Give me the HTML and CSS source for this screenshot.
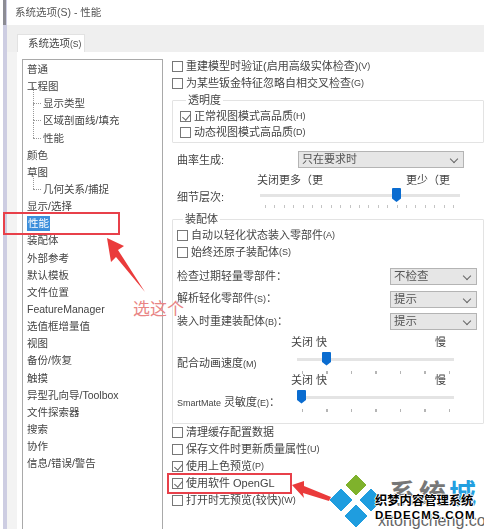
FILE: index.html
```html
<!DOCTYPE html>
<html lang="zh">
<head>
  <meta charset="UTF-8">
  <title>系统选项(S) - 性能</title>
  <link rel="stylesheet" href="styles.css">
</head>
<body>
  <div class="window">
    <div class="titlebar">系统选项(S) - 性能</div>
    <div class="tabband"><div class="tab">系统选项<small>(S)</small></div></div>

    <div class="content">
      <ul class="tree">
        <li>普通</li>
        <li>工程图</li>
        <li class="sub">显示类型</li>
        <li class="sub">区域剖面线/填充</li>
        <li class="sub">性能</li>
        <li>颜色</li>
        <li>草图</li>
        <li class="sub">几何关系/捕捉</li>
        <li>显示/选择</li>
        <li><span class="selected">性能</span></li>
        <li>装配体</li>
        <li>外部参考</li>
        <li>默认模板</li>
        <li>文件位置</li>
        <li>FeatureManager</li>
        <li>选值框增量值</li>
        <li>视图</li>
        <li>备份/恢复</li>
        <li>触摸</li>
        <li>异型孔向导/Toolbox</li>
        <li>文件探索器</li>
        <li>搜索</li>
        <li>协作</li>
        <li>信息/错误/警告</li>
      </ul>

      <div class="options">
        <div class="check"><i class="box"></i>重建模型时验证(启用高级实体检查)<small>(V)</small></div>
        <div class="check"><i class="box"></i>为某些钣金特征忽略自相交叉检查<small>(G)</small></div>

        <fieldset class="group transparency">
          <legend>透明度</legend>
          <div class="check"><i class="box on"></i>正常视图模式高品质<small>(H)</small></div>
          <div class="check"><i class="box"></i>动态视图模式高品质<small>(D)</small></div>
        </fieldset>

        <div class="curve">
          <span class="label">曲率生成:</span>
          <div class="select wide">只在要求时</div>
        </div>
        <div class="detail">
          <span class="label">细节层次:</span>
          <div class="slider-wrap">
            <div class="ends"><span>关闭更多（更</span><span>更少（更</span></div>
            <div class="slider"><b class="thumb at-detail"></b></div>
            <div class="ticks dense"></div>
          </div>
        </div>

        <fieldset class="group assembly">
          <legend>装配体</legend>
          <div class="check"><i class="box"></i>自动以轻化状态装入零部件<small>(A)</small></div>
          <div class="check"><i class="box"></i>始终还原子装配体<small>(S)</small></div>

          <div class="pick first"><span>检查过期轻量零部件：</span><div class="select">不检查</div></div>
          <div class="pick"><span>解析轻化零部件<small>(S)</small>：</span><div class="select">提示</div></div>
          <div class="pick"><span>装入时重建装配体<small>(B)</small>：</span><div class="select">提示</div></div>

          <div class="speed anim">
            <span class="label">配合动画速度<small>(M)</small></span>
            <div class="slider-wrap">
              <div class="ends"><span>关闭 快</span><span>慢</span></div>
              <div class="slider"><b class="thumb at-anim"></b></div>
              <div class="ticks"></div>
            </div>
          </div>
          <div class="speed mate">
            <span class="label"><small class="latin">SmartMate</small> 灵敏度<small>(E)</small>：</span>
            <div class="slider-wrap">
              <div class="ends"><span>关闭 快</span><span>慢</span></div>
              <div class="slider"><b class="thumb at-mate"></b></div>
              <div class="ticks"></div>
            </div>
          </div>
        </fieldset>

        <div class="check"><i class="box"></i>清理缓存配置数据</div>
        <div class="check"><i class="box"></i>保存文件时更新质量属性<small>(U)</small></div>
        <div class="check"><i class="box on"></i>使用上色预览<small>(P)</small></div>
        <div class="check"><i class="box on"></i>使用软件 OpenGL</div>
        <div class="check"><i class="box"></i>打开时无预览(较快)<small>(W)</small></div>
      </div>
    </div>
  </div>

  <!-- annotations drawn over the screenshot -->
  <div class="mark mark-perf"></div>
  <div class="mark mark-gl"></div>
  <svg class="arrows" width="484" height="529" viewBox="0 0 484 529">
    <path d="M107 238 L124 246 L118 250 L145 292 L116 257 L111 262 Z" fill="#ea3b3b"/>
    <path d="M292 485 L304 481 L304 486 L331 497 L329 501 L303 493 L304 498 Z" fill="#ea3b3b"/>
    <path d="M356 475 L366 485 L356 495 L346 485 Z" fill="#7fb22c" stroke="#7fb22c" stroke-linejoin="round"/>
    <path d="M341 489 L352 500 L341 511 L330 500 Z" fill="#1f9ddf" stroke="#1f9ddf" stroke-linejoin="round"/>
    <path d="M371 489 L382 500 L371 511 L360 500 Z" fill="#1f9ddf" stroke="#1f9ddf" stroke-linejoin="round"/>
    <path d="M356 505 L367 516 L356 527 L345 516 Z" fill="#1f9ddf" stroke="#1f9ddf" stroke-linejoin="round"/>
  </svg>
  <div class="note">选这个</div>
  <div class="brand"><span class="grey">系统</span><span class="blue">城</span></div>
  <div class="brand-url">xitongcheng.com</div>
  <div class="stamp">
    <div>织梦内容管理系统</div>
    <div class="latin-stamp">DEDECMS.COM</div>
  </div>
</body>
</html>
```

FILE: styles.css
```css
* { box-sizing: border-box; margin: 0; padding: 0; }
html, body { height: 529px; overflow: hidden; }
body {
  position: relative;
  background: #fff;
  color: #444;
  font-family: "Liberation Sans", "Noto Sans CJK SC", sans-serif;
  font-size: 10.5px;
  line-height: 17px;
}
small { font-size: 8.5px; }

.window {
  height: 529px;
  margin-left: 3px;
  border-left: 4px solid #cdcde2;
  background: #fff;
  filter: blur(0.35px);
}
.titlebar {
  height: 25px;
  padding: 4px 0 0 8px;
  margin-left: -4px;
  border-left: 3px solid #8c8c94;
  padding-left: 9px;
  color: #555;
}
.tabband {
  height: 27px;
  padding: 9px 0 0 10px;
  background: #efefef;
}
.tab {
  width: 68px;
  height: 18px;
  padding-left: 10px;
  background: #fff;
  border: 1px solid #e2e2e2;
  border-bottom: none;
}

.content {
  display: flex;
  height: 477px;
  padding: 7px 0 0 5px;
  border-left: 10px solid #f3f3f3;
}
.tree {
  flex: none;
  width: 141px;
  list-style: none;
  padding: 1px 0 0 4px;
  border: 1px solid #a9a9a9;
  border-bottom: none;
}
.tree li { height: 17.15px; position: relative; white-space: nowrap; }
.tree .sub { padding-left: 16px; }
.tree .sub::before {
  content: "";
  position: absolute;
  left: 6px;
  top: 8px;
  width: 8px;
  border-top: 1px dotted #999;
}
.tree .sub::after {
  content: "";
  position: absolute;
  left: 6px;
  top: -8px;
  height: 16px;
  border-left: 1px dotted #999;
}
.selected { background: #3d8fdc; color: #fff; padding: 0 1px; display: inline-block; line-height: 15px; }

.options { flex: none; width: 312px; margin: -1px 0 0 9px; font-size: 11px; }
.options small { font-size: 9px; }
.check { display: flex; align-items: center; height: 17px; white-space: nowrap; }
.box {
  flex: none;
  width: 11px;
  height: 11px;
  margin-right: 3px;
  border: 1px solid #777;
  background: #fff;
  position: relative;
}
.box.on::after {
  content: "";
  position: absolute;
  left: 2.5px;
  top: 0;
  width: 4px;
  height: 7px;
  border: solid #666;
  border-width: 0 1px 1px 0;
  transform: rotate(40deg);
}

.group { border: 1px solid #e3e3e3; border-radius: 1px; }
.group legend { margin-left: 6px; padding: 0 2px; line-height: 14px; }
.transparency { height: 50px; margin-top: 1px; padding: 0 0 0 7px; }
.transparency legend { margin-bottom: 1px; }
.transparency .check { height: 16px; }

.curve { display: flex; align-items: center; height: 17px; margin-top: 8px; padding-left: 5px; }
.curve .label { width: 121px; padding-top: 1px; }
.select {
  position: relative;
  width: 87px;
  height: 17px;
  padding-left: 3px;
  background: #e6e6e6;
  border: 1px solid #b4b4b4;
  font-size: 11.5px;
  line-height: 15px;
  color: #555;
}
.select.wide { width: 166px; font-size: 11px; }
.select::after {
  content: "";
  position: absolute;
  right: 6px;
  top: 4px;
  width: 5px;
  height: 5px;
  border: solid #666;
  border-width: 0 1px 1px 0;
  transform: rotate(45deg);
}

.detail { display: flex; height: 44px; padding-left: 5px; }
.detail .label { width: 80px; padding-top: 21px; }
.slider-wrap { position: relative; width: 203px; padding-top: 4px; }
.ends { display: flex; justify-content: space-between; height: 17px; padding-right: 10px; white-space: nowrap; }
.slider { position: relative; height: 3px; margin: 5px 0 0 3px; background: #e4e4e4; }
.thumb {
  position: absolute;
  top: -6px;
  width: 9px;
  height: 14px;
  background: #0a6cd0;
  border-radius: 1px 1px 0 0;
  clip-path: polygon(0 0, 100% 0, 100% 75%, 50% 100%, 0 75%);
}
.at-detail { left: 132px; }
.at-anim { left: 25px; }
.at-mate { left: 0; }
.ticks {
  height: 3px;
  margin: 8px 0 0 5px;
  background: repeating-linear-gradient(90deg, #b5b5b5 0 1px, transparent 1px 24.5px);
}
.ticks.dense {
  margin-left: 8px;
  margin-right: 6px;
  background: repeating-linear-gradient(90deg, #c4c4c4 0 1px, transparent 1px 9.4px);
}

.assembly { height: 212px; padding: 0 0 0 4px; }
.assembly legend { margin-bottom: 1px; }
.pick { display: flex; justify-content: space-between; align-items: center; height: 17px; margin-top: 5.5px; padding-right: 6px; white-space: nowrap; }
.pick.first { margin-top: 7px; }

.speed { display: flex; }
.speed .label { width: 114px; white-space: nowrap; }
.speed .slider-wrap { width: 163px; padding-top: 0; }
.speed .slider { margin: 7px 0 0 6px; }
.speed .ticks { margin: 10px 0 0 11px; }
.speed .ends { padding-right: 8px; }
.anim { margin-top: 3.5px; height: 38px; }
.anim .label { padding-top: 21px; }
.mate { height: 40px; }
.mate .label { padding-top: 22px; }
.options small.latin { font-size: 9px; }

/* annotations */
.mark { position: absolute; border: 2px solid #e8404a; }
.mark-perf { left: 3px; top: 212px; width: 117px; height: 23px; }
.mark-gl { left: 167px; top: 473px; width: 125px; height: 21px; }
.arrows { position: absolute; left: 0; top: 0; }
.note {
  position: absolute;
  left: 133px;
  top: 299px;
  font-size: 17px;
  line-height: 22px;
  color: #e98585;
}
.brand {
  position: absolute;
  left: 389px;
  top: 479px;
  font-size: 27px;
  letter-spacing: 3px;
  line-height: 32px;
  font-weight: 700;
  white-space: nowrap;
}
.brand .grey { color: #777; }
.brand .blue { color: #239fe0; }
.brand-url {
  position: absolute;
  left: 378px;
  top: 513px;
  font-size: 16px;
  line-height: 15px;
  color: #666;
}
.stamp {
  position: absolute;
  left: 375px;
  top: 493px;
  width: 102px;
  color: #000;
  font-size: 12.3px;
  line-height: 16px;
  font-weight: 700;
  white-space: nowrap;
  text-shadow: 1px 0 0 #fff, -1px 0 0 #fff, 0 1px 0 #fff, 0 -1px 0 #fff;
}
.latin-stamp { font-size: 11.5px; letter-spacing: 1.2px; line-height: 13px; }
```
